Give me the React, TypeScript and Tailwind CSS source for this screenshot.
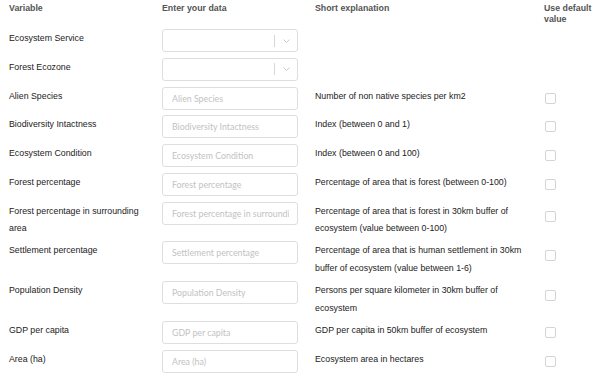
import React from "react";

type Row = {
  label: string;
  kind: "select" | "input";
  expl?: string;
  tall?: boolean;
};

const rows: Row[] = [
  { label: "Ecosystem Service", kind: "select" },
  { label: "Forest Ecozone", kind: "select" },
  { label: "Alien Species", kind: "input", expl: "Number of non native species per km2" },
  { label: "Biodiversity Intactness", kind: "input", expl: "Index (between 0 and 1)" },
  { label: "Ecosystem Condition", kind: "input", expl: "Index (between 0 and 100)" },
  { label: "Forest percentage", kind: "input", expl: "Percentage of area that is forest (between 0-100)" },
  {
    label: "Forest percentage in surrounding area",
    kind: "input",
    expl: "Percentage of area that is forest in 30km buffer of ecosystem (value between 0-100)",
    tall: true,
  },
  {
    label: "Settlement percentage",
    kind: "input",
    expl: "Percentage of area that is human settlement in 30km buffer of ecosystem (value between 1-6)",
    tall: true,
  },
  {
    label: "Population Density",
    kind: "input",
    expl: "Persons per square kilometer in 30km buffer of ecosystem",
    tall: true,
  },
  { label: "GDP per capita", kind: "input", expl: "GDP per capita in 50km buffer of ecosystem" },
  { label: "Area (ha)", kind: "input", expl: "Ecosystem area in hectares" },
];

function SelectBox() {
  return (
    <div className="w-[136px] h-[23px] border border-[#dedede] rounded-[3px] bg-white flex items-center justify-end">
      <div className="w-px h-[12px] bg-[#d6d6d6]" />
      <div className="w-[22px] flex items-center justify-center">
        <svg width="7" height="4" viewBox="0 0 7 4" fill="none">
          <polyline points="0.5,0.5 3.5,3.5 6.5,0.5" stroke="#c4c4c4" strokeWidth="0.9" />
        </svg>
      </div>
    </div>
  );
}

function InputBox({ placeholder }: { placeholder: string }) {
  return (
    <input
      readOnly
      placeholder={placeholder}
      className="w-[136px] h-[23px] border border-[#dedede] rounded-[3px] bg-white pl-[9px] pr-[8px] text-[8.8px] placeholder:text-[#c2c2c2] outline-none"
      style={{ fontFamily: "Lato, 'Noto Sans', sans-serif" }}
    />
  );
}

export default function App() {
  return (
    <div
      className="w-[595px] h-[378px] bg-white overflow-hidden text-[8.8px] text-[#222222]"
      style={{ fontFamily: "'Liberation Sans', Arial, sans-serif" }}
    >
      <div className="flex items-start pt-[3px] font-bold text-[#555555] leading-[11px]">
        <div className="w-[162px] pl-[9px]">Variable</div>
        <div className="w-[153px]">Enter your data</div>
        <div className="w-[229px]">Short explanation</div>
        <div className="w-[51px]">Use default value</div>
      </div>
      <div className="flex flex-col gap-[5.75px] mt-[4px]">
        {rows.map((r) => (
          <div key={r.label} className="flex items-start">
            <div className="w-[162px] shrink-0 pl-[9px] pr-[13px] pt-[1px] -mb-[2px] leading-[17.6px]">{r.label}</div>
            <div className="w-[153px] shrink-0">
              {r.kind === "select" ? <SelectBox /> : <InputBox placeholder={r.label} />}
            </div>
            <div className="w-[229px] shrink-0 pr-[14px] pt-[1px] -mb-[2px] leading-[17.6px]">{r.expl ?? ""}</div>
            <div className="w-[51px] shrink-0 pl-[1px]">
              {r.kind === "input" && (
                <div
                  className={
                    r.tall
                      ? "mt-[9px] w-[11px] h-[11px] border border-[#d4d4d4] rounded-[2px] bg-white"
                      : "mt-[6px] w-[11px] h-[11px] border border-[#d4d4d4] rounded-[2px] bg-white"
                  }
                />
              )}
            </div>
          </div>
        ))}
      </div>
    </div>
  );
}
